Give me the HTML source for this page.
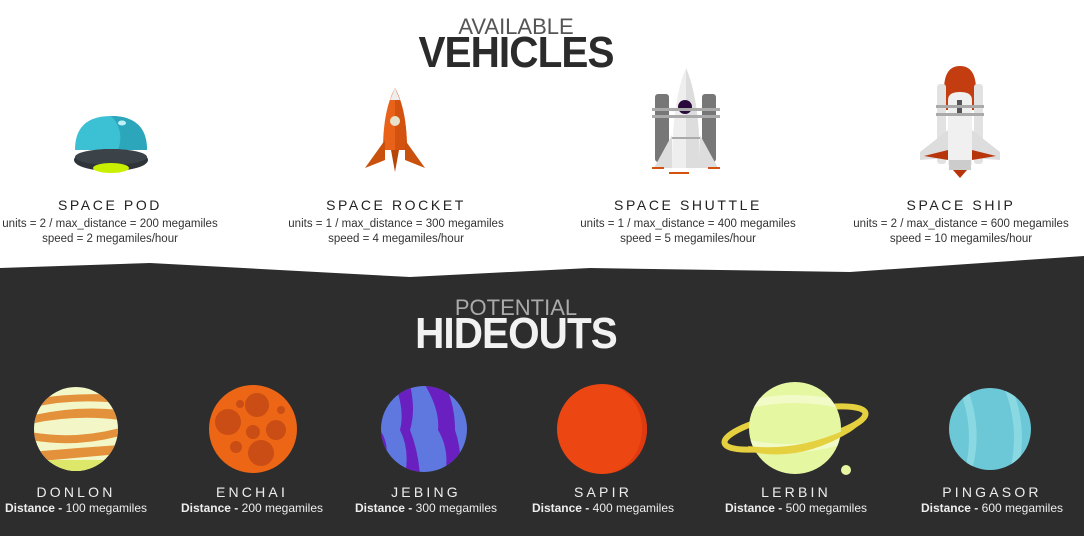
<!DOCTYPE html>
<html><head><meta charset="utf-8"><style>
*{margin:0;padding:0;box-sizing:border-box}
body{width:1084px;height:536px;overflow:hidden;background:#fff;font-family:"Liberation Sans",sans-serif;position:relative}
.abs{position:absolute}
.t{position:absolute;text-align:center;white-space:nowrap}
.vn{font-size:14px;letter-spacing:2.6px;color:#222;top:197px;width:300px}
.vd{font-size:11.5px;color:#333;width:300px;line-height:15px;top:217px}
.pn{font-size:14px;letter-spacing:3.2px;color:#eee;top:484px;width:200px}
.pd{font-size:12px;color:#eee;top:501px;width:220px}
.pd b{font-weight:bold}
</style></head><body>
<svg class="abs" style="left:0;top:0" width="1084" height="536">
<polygon points="0,268 150,263 410,277 590,268 850,272 1084,256 1084,536 0,536" fill="#2d2d2d"/>
<!-- space pod -->
<path d="M75,150 Q75,116 111,116 Q147,116 147,150 Z" fill="#3cc0d4"/>
<path d="M111,116 Q147,116 147,150 L118,150 Q125,130 111,116Z" fill="#2ca6bb"/>
<ellipse cx="122" cy="123" rx="4" ry="2.5" fill="#bdf0f7"/>
<ellipse cx="111" cy="160" rx="37" ry="11" fill="#2f3438"/>
<ellipse cx="111" cy="157" rx="36" ry="8" fill="#3b4248"/>
<ellipse cx="111" cy="168" rx="18" ry="5" fill="#c9f000"/>
<!-- rocket -->
<path d="M395,88 Q383,110 383,150 L407,150 Q407,110 395,88Z" fill="#e8621a"/>
<path d="M395,88 Q407,110 407,150 L395,150Z" fill="#d4520f"/>
<path d="M395,88 L390,100 L400,100Z" fill="#eee"/>
<circle cx="395" cy="121" r="5" fill="#e8e2cc"/>
<path d="M385,140 L365,168 L385,160Z" fill="#c9500d"/>
<path d="M405,140 L425,168 L405,160Z" fill="#c9500d"/>
<path d="M391,150 L395,172 L399,150Z" fill="#b84508"/>
<!-- shuttle -->
<rect x="655" y="94" width="14" height="68" rx="3" fill="#777"/>
<rect x="702" y="94" width="14" height="68" rx="3" fill="#777"/>
<path d="M686,68 Q672,100 672,168 L700,168 Q700,100 686,68Z" fill="#eee"/>
<path d="M686,68 Q700,100 700,168 L686,168Z" fill="#ddd"/>
<path d="M672,135 L654,168 L672,168Z" fill="#ddd"/><path d="M700,135 L718,168 L700,168Z" fill="#ddd"/>
<circle cx="685" cy="107" r="7" fill="#2a0a3a"/>
<rect x="652" y="108" width="68" height="3" fill="#aaa"/><rect x="652" y="115" width="68" height="3" fill="#aaa"/>
<rect x="672" y="137" width="28" height="2" fill="#aaa"/>
<rect x="652" y="167" width="12" height="2" fill="#d4520f"/><rect x="669" y="172" width="20" height="2" fill="#d4520f"/><rect x="708" y="167" width="12" height="2" fill="#d4520f"/>
<!-- ship -->
<path d="M944,90 Q944,66 960,66 Q976,66 976,90 L976,110 L944,110Z" fill="#c33d10"/>
<rect x="937" y="84" width="9" height="80" rx="3" fill="#e2e2e2"/>
<rect x="974" y="84" width="9" height="80" rx="3" fill="#e2e2e2"/>
<path d="M948,100 Q948,92 960,92 Q972,92 972,100 L972,165 L948,165Z" fill="#f0f0f0"/>
<rect x="957" y="100" width="5" height="15" fill="#555"/>
<rect x="936" y="105" width="48" height="3" fill="#aaa"/><rect x="936" y="113" width="48" height="3" fill="#aaa"/>
<path d="M948,130 L920,152 L920,160 L948,158Z" fill="#ddd"/><path d="M972,130 L1000,152 L1000,160 L972,158Z" fill="#ddd"/>
<path d="M924,156 L948,150 L948,160Z" fill="#b8350c"/><path d="M996,156 L972,150 L972,160Z" fill="#b8350c"/>
<rect x="949" y="160" width="22" height="10" fill="#ccc"/>
<path d="M953,170 L960,178 L967,170Z" fill="#b8350c"/>
<!-- planets -->
<defs>
<clipPath id="c1"><circle cx="76" cy="429" r="42"/></clipPath>
<clipPath id="c3"><circle cx="424" cy="429" r="43"/></clipPath>
<clipPath id="c6"><circle cx="990" cy="429" r="41"/></clipPath>
<clipPath id="c5"><circle cx="795" cy="428" r="46"/></clipPath>
</defs>
<circle cx="76" cy="429" r="42" fill="#f3f7c8"/>
<g clip-path="url(#c1)" fill="#e3913a">
<path d="M30,400 Q70,392 120,395 L120,403 Q70,398 30,408Z"/>
<path d="M30,416 Q75,405 120,410 L120,420 Q75,414 30,424Z"/>
<path d="M30,432 Q75,440 120,428 L120,436 Q75,448 30,440Z"/>
<path d="M30,452 Q75,448 120,445 L120,454 Q75,458 30,462Z"/>
<rect x="30" y="460" width="90" height="15" fill="#dde86a"/>
</g>
<circle cx="253" cy="429" r="44" fill="#ec6616"/>
<g fill="#c94d14"><circle cx="257" cy="405" r="12"/><circle cx="228" cy="422" r="13"/><circle cx="276" cy="430" r="10"/><circle cx="253" cy="432" r="7"/><circle cx="261" cy="453" r="13"/><circle cx="236" cy="447" r="6"/><circle cx="240" cy="404" r="4"/><circle cx="281" cy="410" r="4"/></g>
<circle cx="424" cy="429" r="43" fill="#5f78e0"/>
<g clip-path="url(#c3)" fill="#6a1fc0">
<path d="M395,385 Q405,410 400,430 Q410,450 405,475 L420,475 Q418,450 410,430 Q416,410 410,385Z"/>
<path d="M425,385 Q440,410 438,430 Q450,450 445,475 L460,475 Q462,450 455,430 Q455,405 445,385Z"/>
<path d="M380,430 Q390,445 385,460 L375,460Z"/>
</g>
<circle cx="602" cy="429" r="45" fill="#ec4713"/>
<path d="M602,384 A45,45 0 0 1 602,474 A40,45 0 0 0 602,384Z" fill="#e03a10"/>
<circle cx="990" cy="429" r="41" fill="#6cc8d6"/>
<g clip-path="url(#c6)" fill="#8ad8e2"><path d="M960,390 Q975,430 965,470 L972,470 Q983,430 968,390Z"/><path d="M1005,390 Q1020,430 1010,470 L1018,470 Q1028,430 1013,390Z"/></g>
<ellipse cx="795" cy="428" rx="72" ry="16" transform="rotate(-12 795 428)" fill="none" stroke="#e5d040" stroke-width="6"/>
<circle cx="795" cy="428" r="46" fill="#e6f7a2"/>
<g clip-path="url(#c5)" fill="#f1fbc8"><path d="M750,400 Q795,390 840,400 L840,408 Q795,398 750,408Z"/><path d="M750,440 Q795,450 840,435 L840,445 Q795,458 750,448Z"/></g>
<path d="M748,446 Q795,452 845,430 Q862,420 862,414 Q868,420 850,432 Q800,462 752,452Z" fill="#e5d040"/>
<circle cx="846" cy="470" r="5" fill="#e6f7a2"/>
</svg>
<div class="t" style="left:0;width:1032px;top:14px;font-size:22px;color:#555">AVAILABLE</div>
<div class="t" style="left:0;width:1032px;top:28px;font-size:44px;font-weight:bold;color:#2b2b2b;transform:scaleX(0.92);letter-spacing:-1px">VEHICLES</div>
<div class="t" style="left:0;width:1032px;top:295px;font-size:22px;color:#aaa">POTENTIAL</div>
<div class="t" style="left:0;width:1032px;top:309px;font-size:44px;font-weight:bold;color:#f2f2f2;transform:scaleX(0.92);letter-spacing:-1px">HIDEOUTS</div>

<div class="t vn" style="left:-40px">SPACE POD</div>
<div class="t vd" style="left:-40px">units = 2 / max_distance = 200 megamiles<br>speed = 2 megamiles/hour</div>
<div class="t vn" style="left:246px">SPACE ROCKET</div>
<div class="t vd" style="left:246px">units = 1 / max_distance = 300 megamiles<br>speed = 4 megamiles/hour</div>
<div class="t vn" style="left:538px">SPACE SHUTTLE</div>
<div class="t vd" style="left:538px">units = 1 / max_distance = 400 megamiles<br>speed = 5 megamiles/hour</div>
<div class="t vn" style="left:811px">SPACE SHIP</div>
<div class="t vd" style="left:811px">units = 2 / max_distance = 600 megamiles<br>speed = 10 megamiles/hour</div>

<div class="t pn" style="left:-24px">DONLON</div><div class="t pd" style="left:-34px"><b>Distance -</b> 100 megamiles</div>
<div class="t pn" style="left:152px">ENCHAI</div><div class="t pd" style="left:142px"><b>Distance -</b> 200 megamiles</div>
<div class="t pn" style="left:326px">JEBING</div><div class="t pd" style="left:316px"><b>Distance -</b> 300 megamiles</div>
<div class="t pn" style="left:503px">SAPIR</div><div class="t pd" style="left:493px"><b>Distance -</b> 400 megamiles</div>
<div class="t pn" style="left:696px">LERBIN</div><div class="t pd" style="left:686px"><b>Distance -</b> 500 megamiles</div>
<div class="t pn" style="left:892px">PINGASOR</div><div class="t pd" style="left:882px"><b>Distance -</b> 600 megamiles</div>
</body></html>
